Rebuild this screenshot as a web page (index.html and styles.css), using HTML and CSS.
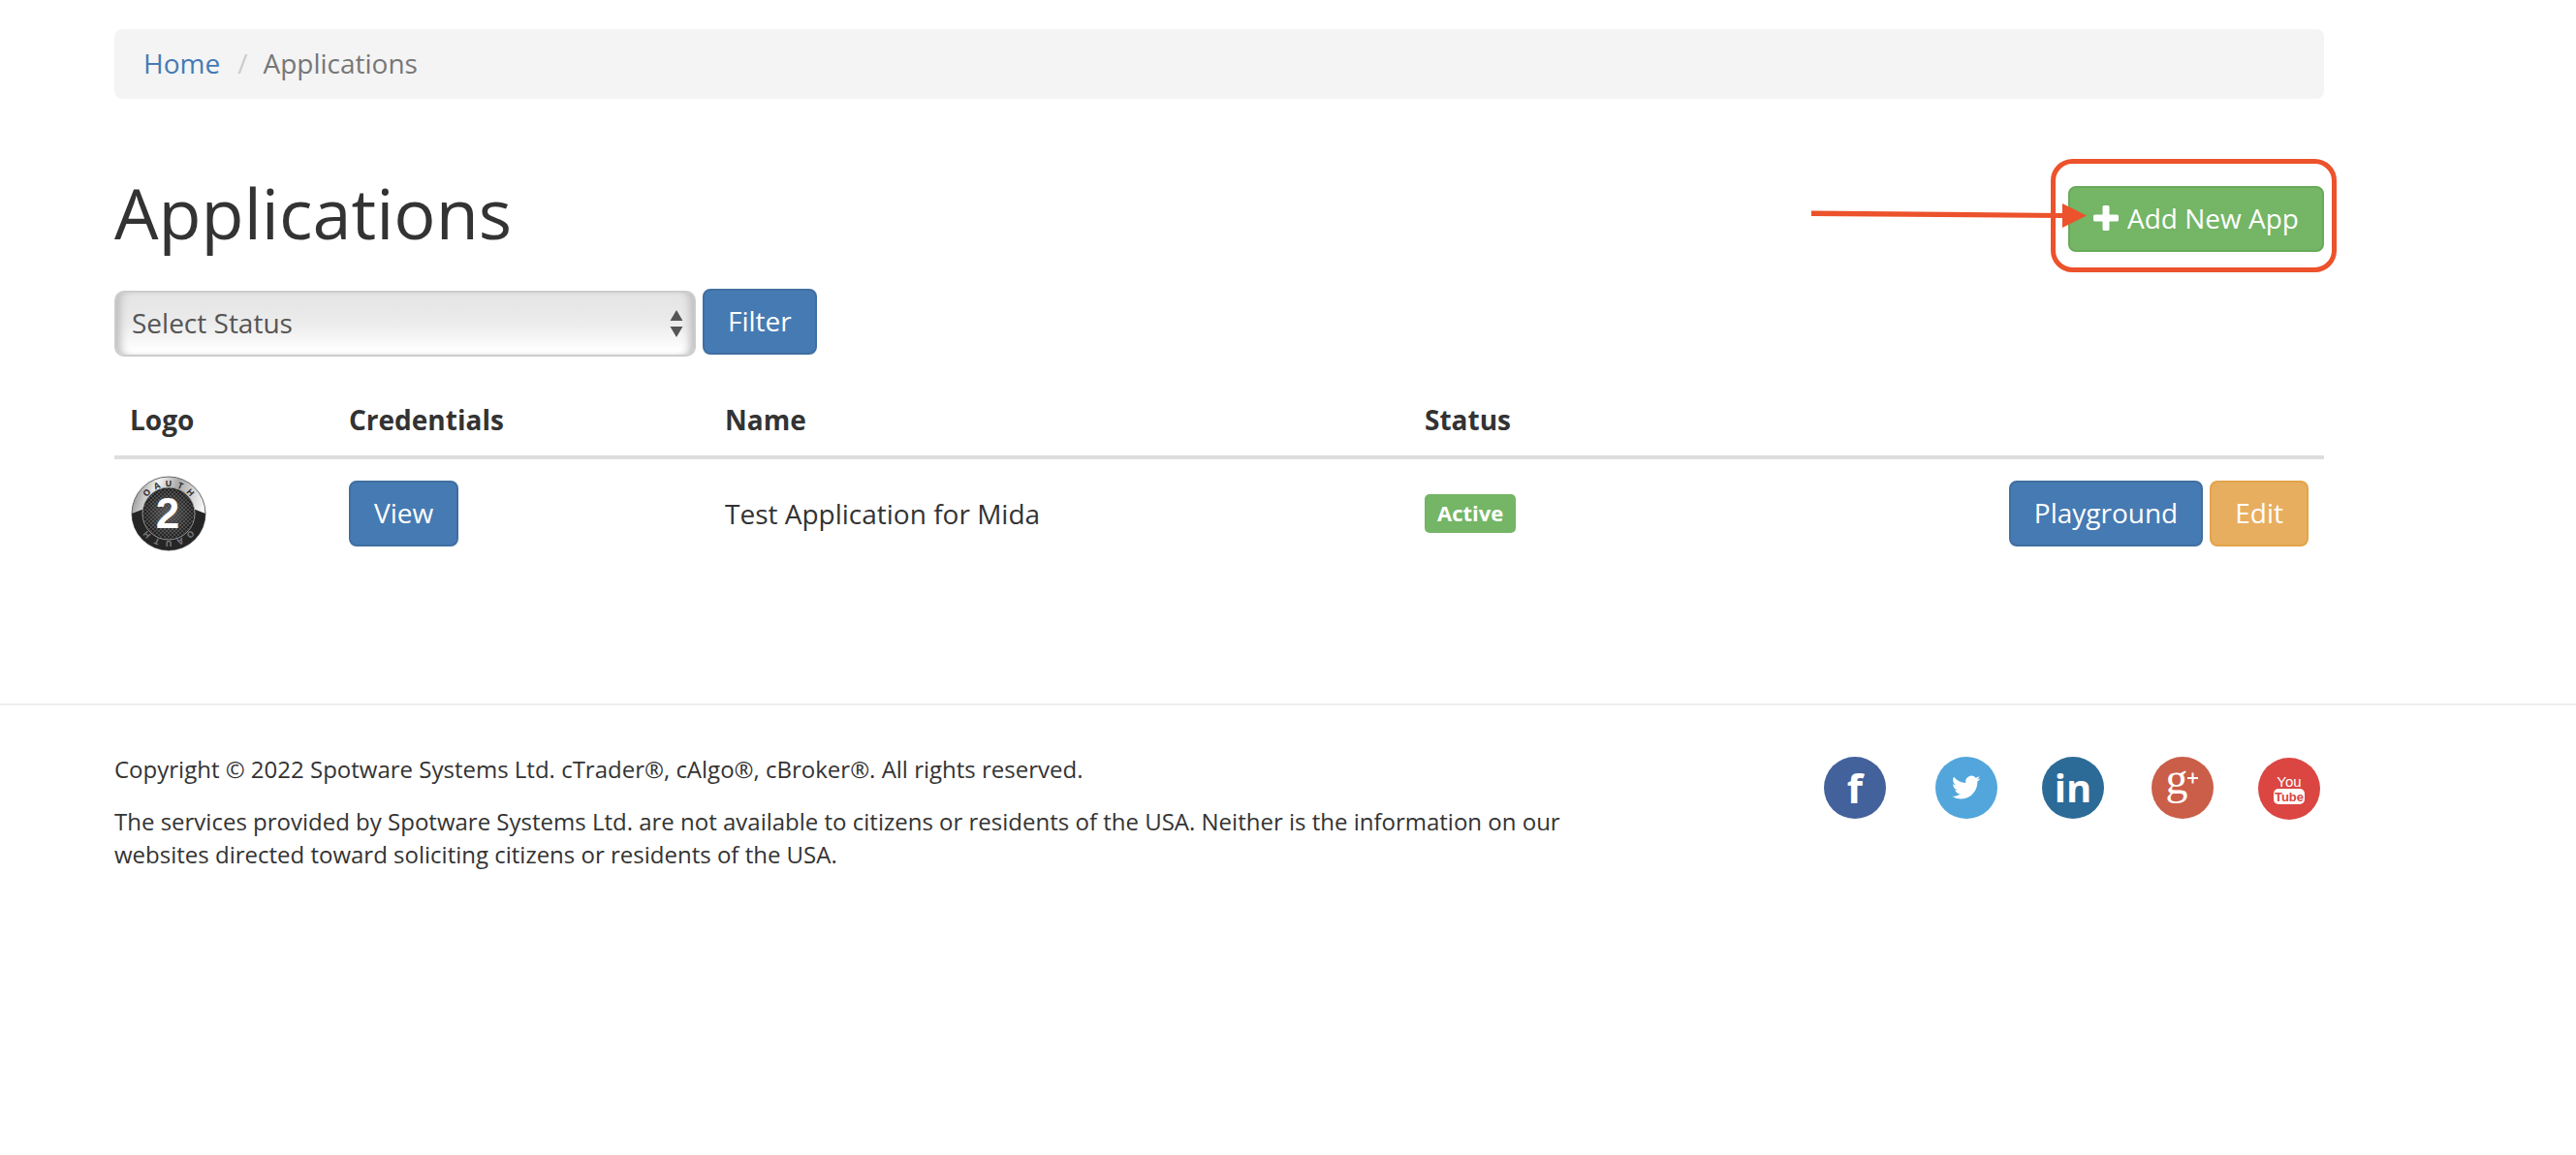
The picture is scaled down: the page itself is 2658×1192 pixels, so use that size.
FILE: index.html
```html
<!DOCTYPE html>
<html lang="en">
<head>
<meta charset="utf-8">
<meta name="viewport" content="width=device-width, initial-scale=1">
<title>Applications</title>
<link rel="stylesheet" href="styles.css">
</head>
<body>
<main class="container">
  <nav aria-label="Breadcrumb">
    <ol class="breadcrumb">
      <li><a href="#">Home</a></li>
      <li class="current">Applications</li>
    </ol>
  </nav>

  <header class="page-header">
    <h1>Applications</h1>
    <div class="add-app">
      <button class="btn btn-success" type="button">
        <svg class="plus" viewBox="0 0 26 26" aria-hidden="true"><path d="M11 0h4q1.500 0 1.500 1.500v8h8q1.500 0 1.500 1.500v4q0 1.500-1.500 1.500h-8v8q0 1.500-1.500 1.500h-4q-1.500 0-1.500-1.500v-8h-8q-1.500 0-1.500-1.500v-4q0-1.500 1.500-1.500h8v-8q0-1.500 1.500-1.500z"/></svg>
        <span>Add New App</span>
      </button>
      <svg class="callout" viewBox="0 0 544 118" aria-hidden="true">
        <rect x="250.500" y="2.500" width="290" height="112" rx="20"/>
        <path class="shaft" d="M1 53.500h0L262 56v5L1 59z"/>
        <path class="head" d="M260 46l25 12.500-25 12.500z"/>
      </svg>
    </div>
  </header>

  <form class="filter">
    <div class="select-box">
      <select class="select" aria-label="Status">
        <option>Select Status</option>
        <option>Active</option>
      </select>
      <svg class="arrows" viewBox="0 0 14 28" aria-hidden="true"><path d="M7 0l6.500 11H.5zM7 28l6.500-11H.5z"/></svg>
    </div>
    <button class="btn btn-primary" type="button">Filter</button>
  </form>

  <table class="apps">
    <colgroup><col class="col-logo"><col class="col-cred"><col class="col-name"><col></colgroup>
    <thead>
      <tr><th>Logo</th><th>Credentials</th><th>Name</th><th>Status</th><th></th></tr>
    </thead>
    <tbody>
      <tr>
        <td>
          <svg class="logo" viewBox="0 0 80 80" role="img" aria-label="OAuth 2">
            <defs>
              <linearGradient id="rim" x1="0" y1="0" x2="1" y2=".3"><stop offset="0" stop-color="#777"/><stop offset=".35" stop-color="#f4f4f4"/><stop offset=".6" stop-color="#aaa"/><stop offset="1" stop-color="#f6f6f6"/></linearGradient>
              <radialGradient id="face"><stop offset="0" stop-color="#555"/><stop offset="1" stop-color="#1c1c1c"/></radialGradient>
              <pattern id="mesh" width="4" height="4" patternUnits="userSpaceOnUse"><path d="M0 0l4 4M4 0L0 4" stroke="#777" stroke-width=".5"/></pattern>
            </defs>
            <circle cx="40" cy="40" r="38" fill="url(#rim)" stroke="#666"/>
            <path d="M2 40l13-5q25 8 50 0l13 5a38 38 0 0 1-76 0z" fill="#252525"/>
            <circle cx="40" cy="40" r="27" fill="url(#face)" stroke="#999"/>
            <circle cx="40" cy="40" r="26" fill="url(#mesh)"/>
            <g class="rim-text">
              <text x="40" y="12" transform="rotate(-46 40 40)">O</text>
              <text x="40" y="12" transform="rotate(-23 40 40)">A</text>
              <text x="40" y="12">U</text>
              <text x="40" y="12" transform="rotate(23 40 40)">T</text>
              <text x="40" y="12" transform="rotate(46 40 40)">H</text>
            </g>
            <g class="rim-text low">
              <text x="40" y="12" transform="rotate(134 40 40)">O</text>
              <text x="40" y="12" transform="rotate(157 40 40)">A</text>
              <text x="40" y="12" transform="rotate(180 40 40)">U</text>
              <text x="40" y="12" transform="rotate(203 40 40)">T</text>
              <text x="40" y="12" transform="rotate(226 40 40)">H</text>
            </g>
            <text class="two" x="39" y="55">2</text>
          </svg>
        </td>
        <td><button class="btn btn-primary" type="button">View</button></td>
        <td>Test Application for Mida</td>
        <td><span class="label">Active</span></td>
        <td>
          <div class="actions">
            <button class="btn btn-primary" type="button">Playground</button>
            <button class="btn btn-warning" type="button">Edit</button>
          </div>
        </td>
      </tr>
    </tbody>
  </table>
</main>

<footer class="footer">
  <div class="container footer-row">
    <div class="legal">
      <p>Copyright © 2022 Spotware Systems Ltd. cTrader®, cAlgo®, cBroker®. All rights reserved.</p>
      <p>The services provided by Spotware Systems Ltd. are not available to citizens or residents of the USA. Neither is the information on our websites directed toward soliciting citizens or residents of the USA.</p>
    </div>
    <div class="social">
      <a href="#" aria-label="Facebook"><svg viewBox="0 0 64 64"><circle cx="32" cy="32" r="32" fill="#43619b"/><text class="fb" x="32" y="48">f</text></svg></a>
      <a href="#" aria-label="Twitter"><svg viewBox="0 0 64 64"><circle cx="32" cy="32" r="32" fill="#52a6db"/><path transform="translate(17 17) scale(1.220)" fill="#fff" d="M23.950 4.570a10 10 0 0 1-2.820.770 4.960 4.960 0 0 0 2.160-2.720c-.950.550-2 .960-3.130 1.180a4.920 4.920 0 0 0-8.380 4.480C7.690 8.090 4.070 6.130 1.640 3.160a4.820 4.820 0 0 0-.670 2.480c0 1.710.870 3.210 2.190 4.100a4.900 4.900 0 0 1-2.230-.620v.060a4.920 4.920 0 0 0 3.950 4.830 5 5 0 0 1-2.210.080 4.940 4.940 0 0 0 4.600 3.420A9.870 9.870 0 0 1 0 19.540a13.990 13.990 0 0 0 7.550 2.210c9.050 0 14-7.500 14-13.980 0-.210 0-.420-.020-.630a9.940 9.940 0 0 0 2.460-2.550z"/></svg></a>
      <a href="#" aria-label="LinkedIn"><svg viewBox="0 0 64 64"><circle cx="32" cy="32" r="32" fill="#2c6b97"/><text class="in" x="32" y="47">in</text></svg></a>
      <a href="#" aria-label="Google Plus"><svg viewBox="0 0 64 64"><circle cx="32" cy="32" r="32" fill="#ca5e49"/><text class="gp" x="26" y="38">g</text><path d="M37 22h11M42.500 16.500v11" stroke="#fff" stroke-width="2"/></svg></a>
      <a href="#" aria-label="YouTube"><svg viewBox="0 0 64 64"><circle cx="32" cy="33" r="32" fill="#db4642"/><text class="you" x="32" y="31">You</text><rect x="16" y="33" width="32" height="16" rx="5" fill="#fff"/><text class="tube" x="32" y="46">Tube</text></svg></a>
    </div>
  </div>
</footer>
</body>
</html>
```
FILE: styles.css
```css
* { box-sizing: border-box; }

body {
  margin: 0;
  padding-top: 30px;
  background: #fff;
  color: #333;
  font: 28px/38px "Open Sans", "Noto Sans", sans-serif;
}

.container {
  width: calc(100% - 236px);
  max-width: 2280px;
  margin-left: 118px;
}

.breadcrumb {
  display: flex;
  margin: 0;
  padding: 16px 30px 18px;
  border-radius: 8px;
  background: #f4f4f4;
  list-style: none;
}
.breadcrumb a { color: #457ab5; text-decoration: none; }
.breadcrumb .current { color: #777; }
.breadcrumb .current::before { content: "/"; padding: 0 16px 0 18px; color: #ccc; }

.page-header {
  display: flex;
  justify-content: space-between;
  align-items: flex-start;
  margin-top: 78px;
}
h1 { margin: 0; font-size: 72px; line-height: 78px; font-weight: 400; }

.btn {
  display: inline-flex;
  align-items: center;
  gap: 9px;
  padding: 12px 24px 14px;
  border: 2px solid;
  border-radius: 8px;
  color: #fff;
  font: inherit;
  white-space: nowrap;
}
.btn-primary { background: #467ab2; border-color: #406fa2; }
.btn-success { background: #74b566; border-color: #69aa59; }
.btn-warning { background: #e8ae60; border-color: #e3a34a; }

.add-app { position: relative; margin-top: 12px; }
.add-app .btn { display: flex; }
.plus { width: 26px; height: 26px; fill: #fff; }
.callout {
  position: absolute;
  top: -28px;
  right: -14px;
  width: 544px;
  height: 118px;
  pointer-events: none;
}
.callout rect { fill: none; stroke: #ec522b; stroke-width: 5; }
.callout path { fill: #ec522b; }

.filter { display: flex; align-items: flex-start; gap: 7px; margin-top: 38px; }
.select-box { position: relative; width: 600px; padding-top: 2px; }
.select {
  display: block;
  appearance: none;
  width: 100%;
  height: 68px;
  padding: 0 16px 2px;
  border: 2px solid #ccc;
  border-radius: 10px;
  background: linear-gradient(#e6e6e6 15%, #ececec 50%, #fff 95%);
  box-shadow: inset 9px 0 8px -5px #bbb, inset -9px 0 8px -5px #bbb;
  color: #555;
  font: inherit;
}
.arrows { position: absolute; right: 13px; top: 22px; width: 14px; height: 28px; fill: #555; }

.apps { width: 100%; margin-top: 30px; border-collapse: collapse; table-layout: fixed; }
.apps th { padding: 16px 16px 18px; border-bottom: 4px solid #ddd; text-align: left; font-weight: 700; }
.apps td { padding: 16px; vertical-align: middle; }
.col-logo { width: 226px; }
.col-cred { width: 388px; }
.col-name { width: 722px; }
.logo { display: block; width: 80px; height: 80px; }
.two { fill: #fff; font: 700 44px "Liberation Sans", sans-serif; text-anchor: middle; }
.rim-text { fill: #333; font-size: 9px; font-weight: 700; text-anchor: middle; }
.rim-text.low { fill: #777; }
.label {
  display: block;
  width: fit-content;
  padding: 3px 13px 5px;
  border-radius: 5px;
  background: #74b566;
  color: #fff;
  font-size: 22px;
  line-height: 32px;
  font-weight: 700;
}
.actions { display: flex; justify-content: flex-end; gap: 7px; }

.footer { margin-top: 140px; padding-top: 49px; border-top: 2px solid #eee; }
.footer-row { display: flex; justify-content: space-between; align-items: flex-start; }
.legal { max-width: 1500px; font-size: 24px; line-height: 34px; }
.legal p { margin: 0 0 20px; }
.social { display: grid; grid-template-columns: 115px 110px 113px 110px 64px; padding: 4px 4px 0 0; }
.social svg { display: block; width: 64px; height: 64px; overflow: visible; }
.social text { fill: #fff; text-anchor: middle; font-weight: 700; }
.social .fb { font-size: 42px; }
.social .in { font-size: 40px; }
.social .gp { font: 400 46px "Liberation Serif", serif; }
.social .you { font: 400 15px "Liberation Sans", sans-serif; }
.social .tube { font: 700 13px "Liberation Sans", sans-serif; fill: #db4642; }
```
